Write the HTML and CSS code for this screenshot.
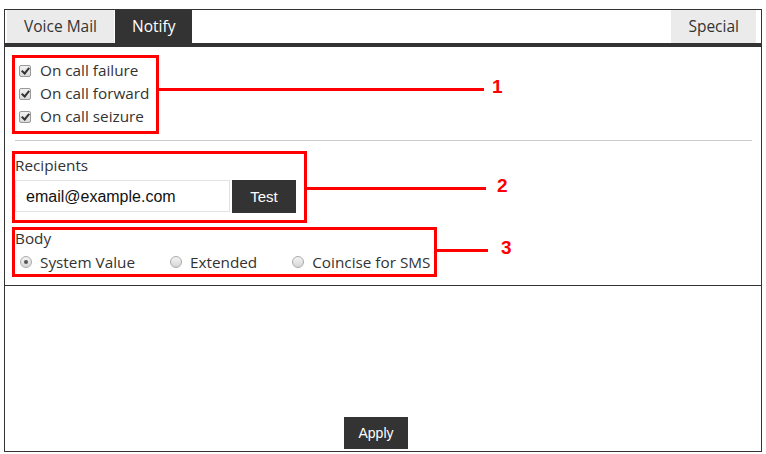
FILE: index.html
```html
<!DOCTYPE html>
<html>
<head>
  <meta charset="UTF-8">
  <title>Notify settings</title>
  <link rel="stylesheet" href="styles.css">
</head>
<body>
  <div class="panel">
    <!-- tabs -->
    <div class="tabs">
      <div class="tab">Voice Mail</div>
      <div class="tab active">Notify</div>
      <div class="tab tab-right">Special</div>
    </div>

    <form class="content">
      <!-- events -->
      <div class="callout c1">
        <label class="check-row"><input type="checkbox" checked> On call failure</label>
        <label class="check-row"><input type="checkbox" checked> On call forward</label>
        <label class="check-row"><input type="checkbox" checked> On call seizure</label>
        <div class="lead"><span class="lead-line"></span><span class="lead-num">1</span></div>
      </div>

      <hr class="sep">

      <!-- recipients -->
      <div class="callout c2">
        <div class="field-label">Recipients</div>
        <div class="recip-row">
          <input class="text-input" type="text" name="recipients" value="email@example.com">
          <button type="button" class="btn btn-test">Test</button>
        </div>
        <div class="lead"><span class="lead-line"></span><span class="lead-num">2</span></div>
      </div>

      <!-- body format -->
      <div class="callout c3">
        <div class="field-label body-label">Body</div>
        <div class="radio-row">
          <label class="radio-opt"><input type="radio" name="body" checked> System Value</label>
          <label class="radio-opt"><input type="radio" name="body"> Extended</label>
          <label class="radio-opt"><input type="radio" name="body"> Coincise for SMS</label>
        </div>
        <div class="lead"><span class="lead-line"></span><span class="lead-num">3</span></div>
      </div>
    </form>

    <div class="footer">
      <button type="button" class="btn btn-apply">Apply</button>
    </div>
  </div>
</body>
</html>
```

FILE: styles.css
```css
body {
  margin: 0;
  font-family: "Open Sans", "Liberation Sans", sans-serif;
  font-size: 15.3px;
  color: #333;
  background: #fff;
}
.panel {
  margin: 9px 0 0 4px;
  width: 758px;
  height: 443px;
  box-sizing: border-box;
  border: 1px solid #333;
  display: flex;
  flex-direction: column;
}

/* tabs */
.tabs {
  display: flex;
  gap: 1px;
  height: 33px;
  padding: 0 5px 0 2px;
  border-bottom: 4px solid #333;
}
.tab {
  padding: 0 17px;
  line-height: 33px;
  font-size: 15.5px;
  background-color: #ebebeb;
  color: #333;
}
.tab.active {
  background-color: #333;
  color: #fff;
}
.tab-right {
  margin-left: auto;
}

/* form area */
.content {
  margin: 0;
  height: 230px;
  padding: 8px 0 0 7px;
  border-bottom: 1px solid #333;
}
.callout {
  position: relative;
  box-sizing: border-box;
  border: 3px solid #f00;
}
.c1 {
  width: 147px;
  padding: 1px 0 3px 4px;
}
.c2 {
  width: 295px;
  margin-top: 10px;
  padding: 1px 0 7px 0;
}
.c3 {
  width: 425px;
  margin-top: 4px;
  padding: 0;
}
.sep {
  border: 0;
  border-top: 1px solid #ccc;
  height: 0;
  margin: 6px 9px 0 3px;
}

.check-row {
  display: flex;
  align-items: center;
  gap: 9px;
  line-height: 23px;
}
.check-row input {
  appearance: none;
  margin: 0;
  width: 12px;
  height: 12px;
  border: 1px solid #999;
  border-radius: 2px;
  background: linear-gradient(#f2f2f2, #d9d9d9);
  position: relative;
}
.check-row input:checked::after {
  content: "";
  position: absolute;
  left: 3px;
  top: 0px;
  width: 3px;
  height: 6px;
  border-right: 2px solid #333;
  border-bottom: 2px solid #333;
  transform: rotate(40deg);
}

.field-label {
  line-height: 20px;
}
.body-label {
  line-height: 16px;
}
.recip-row {
  display: flex;
  gap: 2px;
  margin-top: 5px;
}
.text-input {
  width: 215px;
  height: 32px;
  box-sizing: border-box;
  border: 1px solid #e3e3e3;
  padding: 2px 0 0 10px;
  margin: 0;
  font-family: "Liberation Sans", Arial, sans-serif;
  font-size: 16px;
  color: #111;
  outline: none;
}
.btn {
  background-color: #333;
  color: #fff;
  border: none;
  border-radius: 0;
  padding: 0;
  margin: 0;
  font-family: "Liberation Sans", Arial, sans-serif;
  cursor: pointer;
}
.btn-test {
  width: 64px;
  height: 33px;
  font-size: 15px;
}

.radio-row {
  display: flex;
  gap: 35px;
  height: 24px;
  margin-top: 4px;
  padding-left: 5px;
}
.radio-opt {
  display: flex;
  align-items: center;
  gap: 8px;
}
.radio-opt input {
  appearance: none;
  margin: 0;
  width: 12px;
  height: 12px;
  border: 1px solid #aaa;
  border-radius: 50%;
  background: linear-gradient(#f4f4f4, #d6d6d6);
  position: relative;
}
.radio-opt input:checked::after {
  content: "";
  position: absolute;
  left: 3px;
  top: 3px;
  width: 4px;
  height: 4px;
  border-radius: 50%;
  background-color: #555;
}

/* annotation callouts */
.lead {
  position: absolute;
  left: 100%;
  display: flex;
  align-items: center;
  height: 20px;
}
.lead-line {
  height: 3px;
  background-color: #f00;
}
.lead-num {
  margin-bottom: 4px;
  font-family: "Liberation Sans", Arial, sans-serif;
  font-weight: bold;
  font-size: 19px;
  line-height: 20px;
  color: #f00;
}
.c1 .lead { top: 21px; }
.c1 .lead-line { width: 328px; margin-right: 8px; }
.c2 .lead { top: 24px; }
.c2 .lead-line { width: 182px; margin-right: 11px; }
.c3 .lead { top: 10px; }
.c3 .lead-line { width: 54px; margin-right: 13px; }

/* bottom */
.footer {
  flex: 1;
  display: flex;
  align-items: flex-end;
  padding: 0 0 2px 339px;
}
.btn-apply {
  width: 64px;
  height: 32px;
  font-size: 14px;
}
```
